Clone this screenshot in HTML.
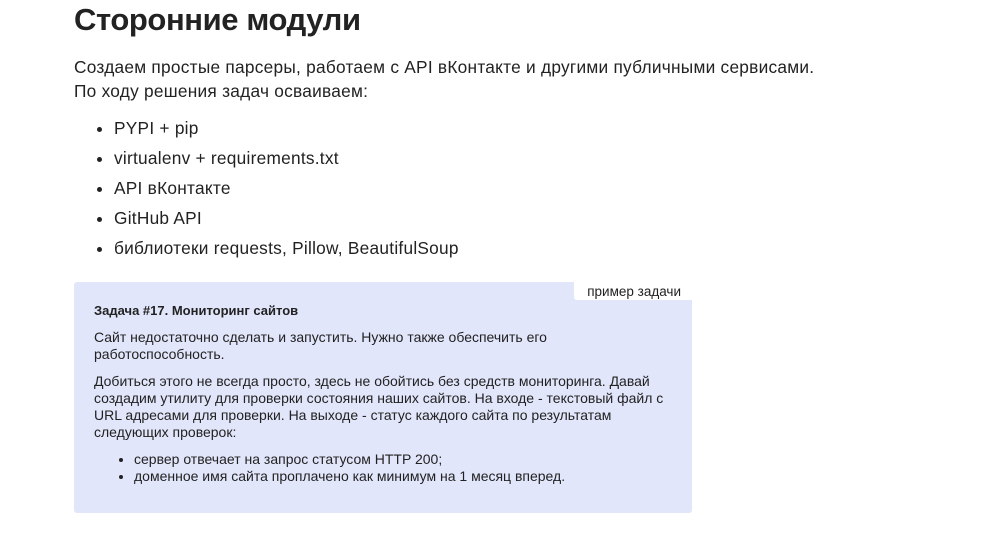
<!DOCTYPE html>
<html><head><meta charset="utf-8"><style>
body{margin:0;background:#fff;font-family:"Liberation Sans",sans-serif;color:#222;}
h1{position:absolute;left:74px;top:2px;margin:0;font-size:31px;font-weight:bold;letter-spacing:-0.4px}
.p{position:absolute;left:74px;top:55px;font-size:17.3px;line-height:24px;margin:0;letter-spacing:0.25px}
ul.main{position:absolute;left:74px;top:113px;margin:0;padding:0 0 0 40px;font-size:17.3px;line-height:30px;letter-spacing:0.25px}
.box{position:absolute;left:74px;top:282px;width:618px;height:231px;background:#e2e6fb;border-radius:3px;box-sizing:border-box;padding:20px 20px 20px 20px;font-size:14px;line-height:17px}
.tag{position:absolute;right:0;top:0;background:#fff;padding:1px 11px 0 13px;font-size:13.5px;line-height:17px;border-radius:0 0 0 3px}
.box b{display:block;margin-bottom:10px;font-size:13px}
.box p{margin:0 0 10px;max-width:578px}
.box p.first{max-width:470px}
.box ul{margin:0;padding-left:40px}
</style></head><body>
<h1>Сторонние модули</h1>
<p class="p">Создаем простые парсеры, работаем с API вКонтакте и другими публичными сервисами.<br>По ходу решения задач осваиваем:</p>
<ul class="main"><li>PYPI + pip</li><li>virtualenv + requirements.txt</li><li>API вКонтакте</li><li>GitHub API</li><li>библиотеки requests, Pillow, BeautifulSoup</li></ul>
<div class="box"><div class="tag">пример задачи</div>
<b>Задача #17. Мониторинг сайтов</b>
<p class="first">Сайт недостаточно сделать и запустить. Нужно также обеспечить его работоспособность.</p>
<p>Добиться этого не всегда просто, здесь не обойтись без средств мониторинга. Давай создадим утилиту для проверки состояния наших сайтов. На входе - текстовый файл с URL адресами для проверки. На выходе - статус каждого сайта по результатам следующих проверок:</p>
<ul><li>сервер отвечает на запрос статусом HTTP 200;</li><li>доменное имя сайта проплачено как минимум на 1 месяц вперед.</li></ul>
</div>
</body></html>
